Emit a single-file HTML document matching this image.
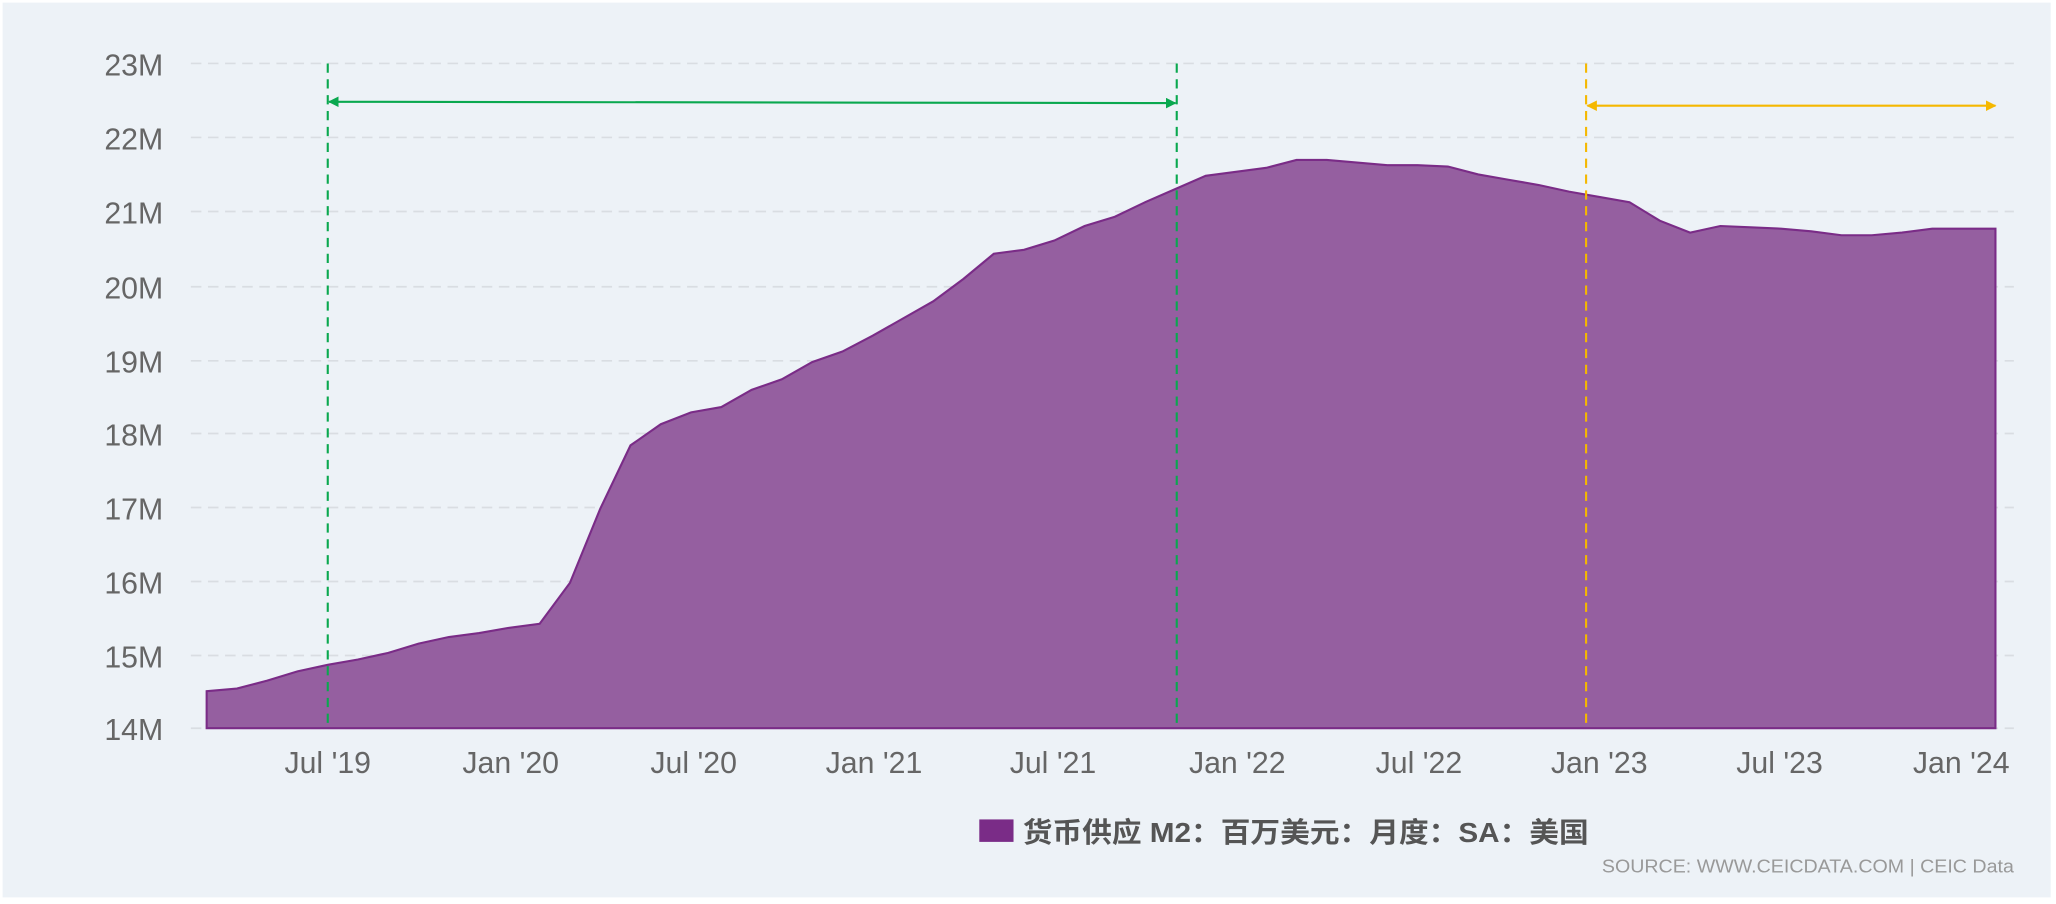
<!DOCTYPE html>
<html><head><meta charset="utf-8"><style>html,body{margin:0;padding:0;background:#fff}svg{display:block}</style></head><body>
<svg width="2056" height="904" viewBox="0 0 1562 684" preserveAspectRatio="none" xmlns="http://www.w3.org/2000/svg">
<defs>
<marker id="ag" viewBox="0 0 10 10" refX="9" refY="5" markerWidth="5" markerHeight="5" orient="auto-start-reverse"><path d="M0 0L10 5L0 10z" fill="#0aa84f"/></marker>
<marker id="ay" viewBox="0 0 10 10" refX="9" refY="5" markerWidth="5" markerHeight="5" orient="auto-start-reverse"><path d="M0 0L10 5L0 10z" fill="#f5b800"/></marker>
</defs>
<rect x="0" y="0" width="1562" height="684" fill="#fff"/>
<rect x="2" y="2" width="1556" height="677" fill="#edf2f7"/>
<g stroke="#d9dde2" stroke-width="1.3" stroke-dasharray="8,5">
<line x1="145" x2="1530" y1="48" y2="48"/><line x1="145" x2="1530" y1="104" y2="104"/><line x1="145" x2="1530" y1="160" y2="160"/><line x1="145" x2="1530" y1="217" y2="217"/><line x1="145" x2="1530" y1="273" y2="273"/><line x1="145" x2="1530" y1="328" y2="328"/><line x1="145" x2="1530" y1="384" y2="384"/><line x1="145" x2="1530" y1="440" y2="440"/><line x1="145" x2="1530" y1="496" y2="496"/><line x1="145" x2="1530" y1="551" y2="551"/>
</g>
<g font-family="Liberation Sans, sans-serif" font-size="23" fill="#666" text-anchor="end">
<text x="124" y="57">23M</text><text x="124" y="113">22M</text><text x="124" y="169">21M</text><text x="124" y="226">20M</text><text x="124" y="282">19M</text><text x="124" y="337">18M</text><text x="124" y="393">17M</text><text x="124" y="449">16M</text><text x="124" y="505">15M</text><text x="124" y="560">14M</text>
</g>
<path fill="#955fa0" stroke="#7a2c87" stroke-width="1.6" d="M157,523 L180,521 203,515 226,508 249,503 272,499 295,494 318,487 341,482 364,479 387,475 410,472 433,441 456,385 479,337 502,321 525,312 548,308 571,295 594,287 617,274 640,266 663,254 686,241 709,228 732,211 755,192 778,189 801,182 824,171 847,164 870,153 893,143 916,133 939,130 962,127 985,121 1008,121 1031,123 1054,125 1077,125 1100,126 1123,132 1146,136 1169,140 1192,145 1215,149 1238,153 1261,167 1284,176 1307,171 1330,172 1353,173 1376,175 1399,178 1422,178 1445,176 1468,173 1491,173 1516,173 L1516,551 L157,551 Z"/>
<g font-family="Liberation Sans, sans-serif" font-size="23" fill="#666" text-anchor="middle">
<text x="249" y="585">Jul '19</text><text x="388" y="585">Jan '20</text><text x="527" y="585">Jul '20</text><text x="664" y="585">Jan '21</text><text x="800" y="585">Jul '21</text><text x="940" y="585">Jan '22</text><text x="1078" y="585">Jul '22</text><text x="1215" y="585">Jan '23</text><text x="1352" y="585">Jul '23</text><text x="1490" y="585">Jan '24</text>
</g>
<g stroke="#0aa84f" stroke-width="1.6">
<line x1="249" y1="48" x2="249" y2="551" stroke-dasharray="7,5"/>
<line x1="894" y1="48" x2="894" y2="551" stroke-dasharray="7,5"/>
<line x1="250" y1="77" x2="893" y2="78" marker-start="url(#ag)" marker-end="url(#ag)"/>
</g>
<g stroke="#f5b800" stroke-width="1.6">
<line x1="1205" y1="48" x2="1205" y2="551" stroke-dasharray="7,5"/>
<line x1="1206" y1="80" x2="1516" y2="80" marker-start="url(#ay)" marker-end="url(#ay)"/>
</g>
<rect x="744" y="620" width="26" height="17" fill="#7a2c87"/>
<text x="777" y="637" font-family="Liberation Sans, Noto Sans CJK SC, sans-serif" font-size="21" font-weight="bold" fill="#555" textLength="430" lengthAdjust="spacingAndGlyphs">货币供应 M2：百万美元：月度：SA：美国</text>
<text x="1530" y="660" text-anchor="end" font-family="Liberation Sans, sans-serif" font-size="14" fill="#999" textLength="313" lengthAdjust="spacingAndGlyphs">SOURCE: WWW.CEICDATA.COM | CEIC Data</text>
</svg>
</body></html>
